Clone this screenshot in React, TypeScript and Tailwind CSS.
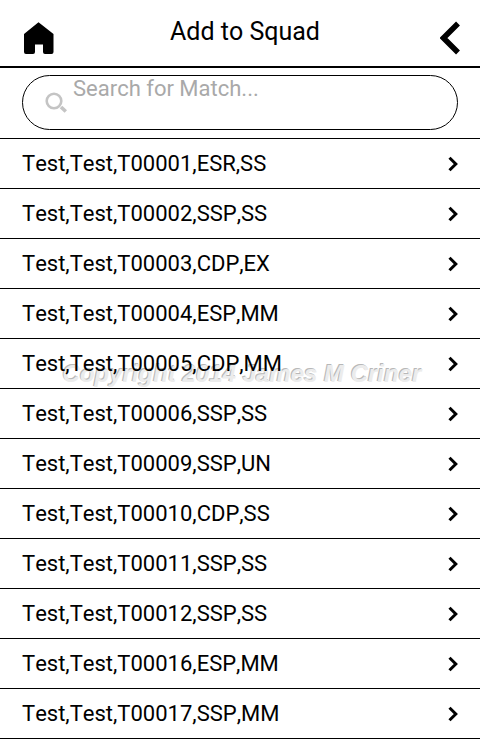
const matches = [
  'Test,Test,T00001,ESR,SS',
  'Test,Test,T00002,SSP,SS',
  'Test,Test,T00003,CDP,EX',
  'Test,Test,T00004,ESP,MM',
  'Test,Test,T00005,CDP,MM',
  'Test,Test,T00006,SSP,SS',
  'Test,Test,T00009,SSP,UN',
  'Test,Test,T00010,CDP,SS',
  'Test,Test,T00011,SSP,SS',
  'Test,Test,T00012,SSP,SS',
  'Test,Test,T00016,ESP,MM',
  'Test,Test,T00017,SSP,MM',
];

function HomeIcon() {
  return (
    <svg width="30" height="32" viewBox="0 0 30 32" aria-hidden="true">
      <path d="M14.5 0.3 L29.5 12 V30 Q29.5 32 27.5 32 H21 Q19 32 19 30 V22.5 H11 V30 Q11 32 9 32 H2 Q0 32 0 30 V12 Z" />
    </svg>
  );
}

function BackIcon() {
  return (
    <svg width="20" height="34" viewBox="0 0 20 34" aria-hidden="true">
      <path d="M18 2.5 L3.5 17 L18 31.5" fill="none" stroke="black" strokeWidth="5.5" />
    </svg>
  );
}

function SearchIcon() {
  return (
    <svg width="22" height="22" viewBox="0 0 22 22" fill="none" stroke="#c4c4c4" aria-hidden="true">
      <circle cx="9" cy="9" r="7.3" strokeWidth="2.6" />
      <path d="M16 15 L20.8 19.5" strokeWidth="3.6" />
    </svg>
  );
}

function RowChevron() {
  return (
    <svg width="11" height="16" viewBox="0 0 11 16" aria-hidden="true">
      <path d="M1.5 1.8 L7.8 8 L1.5 14.2" fill="none" stroke="black" strokeWidth="3" />
    </svg>
  );
}

function Watermark() {
  return (
    <p className="pointer-events-none absolute inset-x-0 top-[358px] pl-1 text-center font-['Liberation_Sans',Arial,sans-serif] text-2xl leading-8 font-bold whitespace-nowrap text-[#ececec] italic [text-shadow:-1px_-1px_0_#b8b8b8]">
      Copyright 2014 James M Criner
    </p>
  );
}

export default function App() {
  return (
    <main className="relative min-h-screen bg-white font-[Roboto,sans-serif] text-black [font-kerning:none]">
      <Watermark />
      <header className="relative flex h-17 items-start justify-between border-b-2 border-black pr-5 pl-6">
        <button type="button" aria-label="Home" className="mt-[22px]">
          <HomeIcon />
        </button>
        <h1 className="mt-4 flex-1 pr-1 text-center text-[25px] leading-8">Add to Squad</h1>
        <button type="button" aria-label="Back" className="mt-[21px]">
          <BackIcon />
        </button>
      </header>
      <form role="search" className="relative border-b border-black px-[22px] pt-[7px] pb-2">
        <label className="flex h-[55px] items-start rounded-full border border-black pr-6 pl-[22px]">
          <span className="mt-4 mr-1.5 shrink-0">
            <SearchIcon />
          </span>
          <input
            type="text"
            aria-label="Search for Match"
            placeholder="Search for Match..."
            className="h-[26px] min-w-0 flex-1 bg-transparent text-[22px] leading-[26px] outline-none placeholder:text-[#a9a9a9]"
          />
        </label>
      </form>
      <ul className="relative">
        {matches.map((match) => (
          <li key={match} className="border-b border-black">
            <button type="button" className="flex h-[49px] w-full items-center justify-between pr-[21px] pl-[22px] text-left text-[22px]">
              <span>{match}</span>
              <RowChevron />
            </button>
          </li>
        ))}
      </ul>
    </main>
  );
}
